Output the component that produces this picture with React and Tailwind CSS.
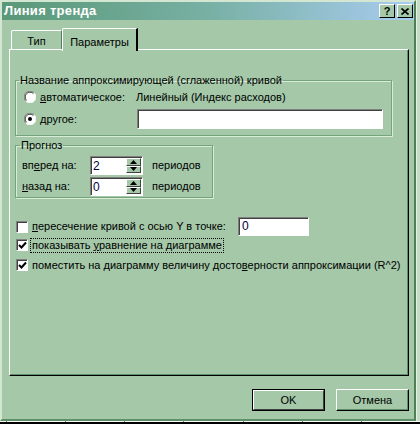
import React from "react";

const font = { fontFamily: '"Liberation Sans", Arial, sans-serif' };

function Radio({ checked }) {
  return (
    <svg width="12" height="12" viewBox="0 0 12 12" className="shrink-0">
      <circle cx="6" cy="6" r="5.5" fill="#ffffff" />
      <path d="M1.8 10.2 A5.5 5.5 0 0 1 10.2 1.8" fill="none" stroke="#808080" strokeWidth="1" />
      <path d="M2.6 9.4 A4.5 4.5 0 0 1 9.4 2.6" fill="none" stroke="#404040" strokeWidth="1" />
      <path d="M10.2 1.8 A5.5 5.5 0 0 1 1.8 10.2" fill="none" stroke="#ffffff" strokeWidth="1" />
      {checked && <circle cx="6" cy="6" r="2" fill="#000000" />}
    </svg>
  );
}

function Check({ checked }) {
  return (
    <div className="w-[12px] h-[12px] shrink-0 bg-white border border-t-[#808080] border-l-[#808080] border-b-white border-r-white shadow-[inset_1px_1px_0_#404040] flex items-center justify-center">
      {checked && (
        <svg width="9" height="9" viewBox="0 0 9 9">
          <path d="M1 4 L3.5 6.5 L8 1.5" fill="none" stroke="#000" strokeWidth="2" />
        </svg>
      )}
    </div>
  );
}

function Spinner({ value }) {
  return (
    <div className="w-[53px] h-[19px] flex bg-white border border-t-[#808080] border-l-[#808080] border-b-white border-r-white shadow-[inset_1px_1px_0_#404040]">
      <div className="flex-1 pl-[2px] pt-[2px] text-[12px] leading-[14px] text-[#000040]">{value}</div>
      <div className="w-[15px] flex flex-col mr-[1px] mt-[1px] mb-[1px]">
        <div className="flex-1 bg-[#a4c8a8] border border-t-white border-l-white border-b-[#404040] border-r-[#404040] flex items-center justify-center">
          <svg width="7" height="4" viewBox="0 0 7 4"><path d="M0 4 L3.5 0 L7 4 Z" fill="#000" /></svg>
        </div>
        <div className="flex-1 bg-[#a4c8a8] border border-t-white border-l-white border-b-[#404040] border-r-[#404040] flex items-center justify-center">
          <svg width="7" height="4" viewBox="0 0 7 4"><path d="M0 0 L7 0 L3.5 4 Z" fill="#000" /></svg>
        </div>
      </div>
    </div>
  );
}

function Field({ className = "", children }) {
  return (
    <div className={"bg-white border border-t-[#808080] border-l-[#808080] border-b-white border-r-white shadow-[inset_1px_1px_0_#404040] " + className}>
      {children}
    </div>
  );
}

export default function App() {
  return (
    <div className="w-[420px] h-[424px] bg-[#c6dcc6] flex flex-col overflow-hidden text-[11px] text-black" style={font}>
      <div className="flex">
        <div className="w-[416px] h-[421px] bg-[#a4c8a8] border-2 border-t-[#d2e6d2] border-l-[#d2e6d2] border-r-[#4f7f57] border-b-[#5f8f67] flex flex-col">
          {/* title bar */}
          <div className="h-[18px] flex items-center justify-between bg-gradient-to-r from-[#5a9878] via-[#78b0a4] to-[#a8ccf0] pl-[2px] pr-[1px]">
            <span className="text-white font-bold text-[13px] tracking-[0.3px]">Линия тренда</span>
            <div className="flex gap-[2px]">
              <div className="w-[16px] h-[14px] bg-[#a4c8a8] border border-t-white border-l-white border-b-black border-r-black flex items-center justify-center text-[11px] font-bold leading-none">?</div>
              <div className="w-[16px] h-[14px] bg-[#a4c8a8] border border-t-white border-l-white border-b-black border-r-black flex items-center justify-center">
                <svg width="8" height="7" viewBox="0 0 8 7"><path d="M0.5 0.5 L7.5 6.5 M7.5 0.5 L0.5 6.5" stroke="#000" strokeWidth="1.6" /></svg>
              </div>
            </div>
          </div>

          {/* tabs */}
          <div className="flex items-end mt-[8px] ml-[9px]">
            <div className="w-[51px] h-[19px] border-t border-l border-r border-t-white border-l-white border-r-[#4f7f57] rounded-tl-[2px] flex items-center justify-center pt-[3px]">Тип</div>
            <div className="relative z-10 w-[76px] h-[23px] -mb-[2px] bg-[#a4c8a8] border-t border-l border-r-2 border-t-white border-l-white border-r-black rounded-tl-[2px] flex items-start justify-center pt-[5px]">Параметры</div>
          </div>

          {/* panel */}
          <div className="ml-[7px] mr-[5px] h-[327px] border border-t-white border-l-white border-r-black border-b-black shadow-[inset_-1px_-1px_0_#5f8f67] px-[5px]">
            <fieldset className="mt-[23px] w-[377px] border border-[#74a47c] shadow-[1px_1px_0_#d8ecd8,inset_1px_1px_0_#d8ecd8] pb-[6px]">
              <legend className="ml-[3px] px-[1px] leading-[14px]">Название аппроксимирующей (сглаженной) кривой</legend>
              <div className="pl-[8px] mt-[2px] h-[16px] flex items-center">
                <Radio />
                <span className="ml-[4px] w-[96px]"><u>а</u>втоматическое:</span>
                <span>Линейный (Индекс расходов)</span>
              </div>
              <div className="pl-[8px] mt-[4px] h-[20px] flex items-center">
                <Radio checked />
                <span className="ml-[4px] w-[97px]"><u>д</u>ругое:</span>
                <Field className="w-[246px] h-[20px]" />
              </div>
            </fieldset>

            <fieldset className="mt-[2px] w-[198px] border border-[#74a47c] shadow-[1px_1px_0_#d8ecd8,inset_1px_1px_0_#d8ecd8] pb-[1px]">
              <legend className="ml-[4px] px-[1px] leading-[14px]">Прогноз</legend>
              <div className="pl-[6px] mt-[4px] h-[19px] flex items-center">
                <span className="w-[68px]">вп<u>е</u>ред на:</span>
                <Spinner value="2" />
                <span className="ml-[9px]">периодов</span>
              </div>
              <div className="pl-[6px] mt-[2px] h-[19px] flex items-center">
                <span className="w-[68px]"><u>н</u>азад на:</span>
                <Spinner value="0" />
                <span className="ml-[9px]">периодов</span>
              </div>
            </fieldset>

            <div className="mt-[19px] flex flex-col pl-[1px]">
              <div className="h-[19px] flex items-center">
                <Check />
                <span className="ml-[4px] w-[206px] whitespace-nowrap"><u>п</u>ересечение кривой с осью Y в точке:</span>
                <Field className="w-[71px] h-[19px] pl-[3px] leading-[14px] pt-[1px] text-[12px] text-[#000040]">0</Field>
              </div>
              <div className="mt-[1px] h-[16px] flex items-center">
                <Check checked />
                <span className="ml-[2px] px-[1px] border border-dotted border-black leading-[13px] whitespace-nowrap">показывать <u>у</u>равнение на диаграмме</span>
              </div>
              <div className="mt-[4px] h-[16px] flex items-center">
                <Check checked />
                <span className="ml-[4px] whitespace-nowrap">поместить на диаграмму величину досто<u>в</u>ерности аппроксимации (R^2)</span>
              </div>
            </div>
          </div>

          {/* buttons */}
          <div className="mt-[13px] mr-[5px] flex justify-end gap-[11px]">
            <div className="w-[73px] h-[22px] border border-black">
              <div className="w-full h-full border border-t-white border-l-white border-b-[#404040] border-r-[#404040] flex items-center justify-center">OK</div>
            </div>
            <div className="w-[73px] h-[22px] border border-t-white border-l-white border-b-black border-r-black shadow-[inset_-1px_-1px_0_#5f8f67] flex items-center justify-center">Отмена</div>
          </div>
        </div>
        <div className="flex-1 border-l border-[#e4efe4]" />
      </div>
      <div className="h-[1px] bg-white flex pl-[6px]">
        {[0, 1, 2, 3, 4, 5, 6].map((i) => (
          <div key={i} className="w-[64px] h-[1px] border-l border-[#808080]" />
        ))}
      </div>
      <div className="h-[2px] bg-black" />
    </div>
  );
}
